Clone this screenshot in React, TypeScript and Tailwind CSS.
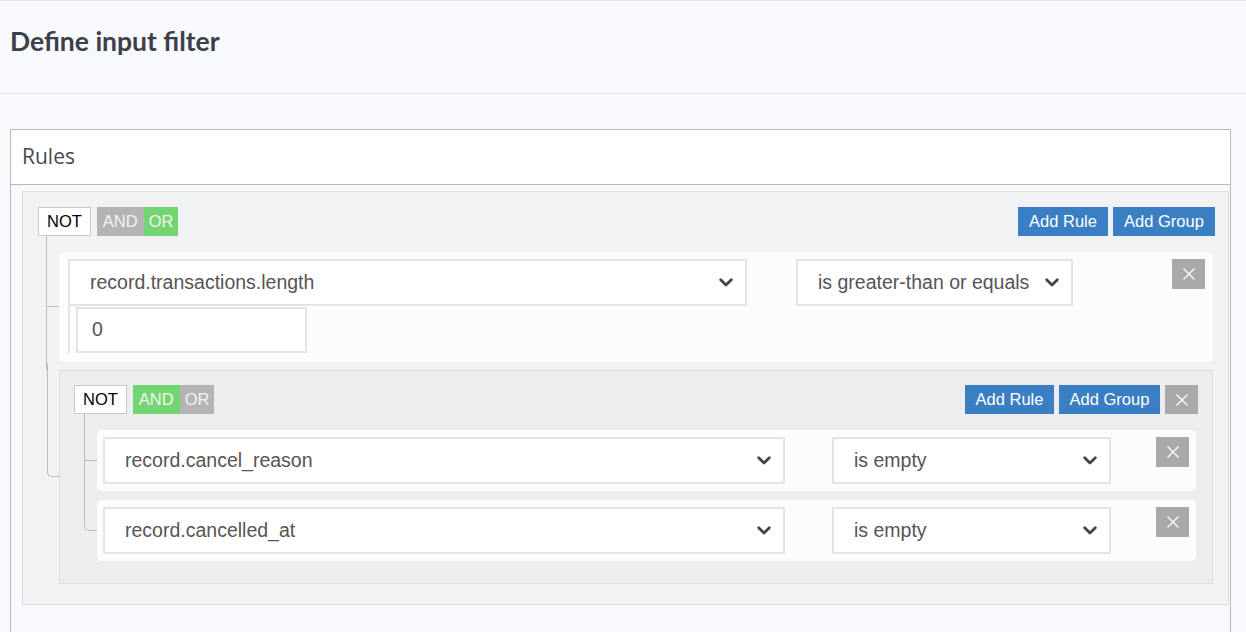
import React from "react";

const sans = { fontFamily: '"Liberation Sans", Arial, sans-serif' };

function Chevron() {
  return (
    <svg width="14" height="9" viewBox="0 0 14 9" className="shrink-0">
      <polyline points="1.7,1.7 7,7 12.3,1.7" fill="none" stroke="#444" strokeWidth="2.8" strokeLinecap="round" strokeLinejoin="round" />
    </svg>
  );
}

function XIcon() {
  return (
    <svg width="14" height="14" viewBox="0 0 14 14">
      <line x1="1.5" y1="1.5" x2="12.5" y2="12.5" stroke="#fff" strokeWidth="1.3" />
      <line x1="12.5" y1="1.5" x2="1.5" y2="12.5" stroke="#fff" strokeWidth="1.3" />
    </svg>
  );
}

function Select({ text, w }: { text: string; w: string }) {
  return (
    <div className={`${w} h-[47px] shrink-0 bg-white border-2 border-[#e4e4e4] flex items-center justify-between pl-[20px] pr-[12px] text-[19.5px] text-[#555]`}>
      <span>{text}</span>
      <Chevron />
    </div>
  );
}

function XButton({ h }: { h: string }) {
  return (
    <div className={`w-[33px] ${h} bg-[#a9a9a9] flex items-center justify-center shrink-0`}>
      <XIcon />
    </div>
  );
}

function Conditions({ and }: { and: boolean }) {
  return (
    <div className="flex items-center gap-[6px]">
      <div className="h-[29px] px-[8px] bg-white border border-[#c9c9c9] flex items-center text-[16.5px] text-black">NOT</div>
      <div className="flex h-[29px] text-[16.5px] text-[#f2f2f2]">
        <div className={`${and ? "bg-[#72d572]" : "bg-[#b4b4b4]"} px-[6px] flex items-center`}>AND</div>
        <div className={`${and ? "bg-[#b4b4b4]" : "bg-[#72d572]"} px-[5px] flex items-center`}>OR</div>
      </div>
    </div>
  );
}

function Connector({ gap, last, gapBelow }: { gap: number; last: boolean; gapBelow: number }) {
  return (
    <>
      <div
        className={`absolute left-[-13px] w-[13px] border-l border-b border-[#bdbdbd] ${last ? "rounded-bl-[5px]" : ""}`}
        style={{ top: -gap, height: `calc(50% + ${gap}px)` }}
      />
      {!last && (
        <div className="absolute left-[-13px] top-1/2 border-l border-[#bdbdbd]" style={{ bottom: -gapBelow }} />
      )}
    </>
  );
}

export default function App() {
  return (
    <div className="w-[1246px] h-[632px] overflow-hidden bg-[#f8f9fc] border-t border-[#e1e6ec]" style={sans}>
      <div className="h-[93px] border-b border-[#dde2e8] flex items-center px-[10px] pb-[10px]">
        <h1 className="text-[26.5px] font-bold text-[#3b4048]" style={{ fontFamily: 'Lato, "Open Sans", sans-serif' }}>
          Define input filter
        </h1>
      </div>

      <div className="ml-[10px] mr-[15px] mt-[35px] border border-[#b9b9b9] h-[600px]">
        <div className="h-[55px] bg-white border-b border-[#b9b9b9] flex items-center px-[11px]">
          <span className="text-[21px] text-[#454a52]" style={{ fontFamily: '"Open Sans", "Noto Sans", sans-serif' }}>Rules</span>
        </div>
        <div className="pl-[11px] pr-[1px] pt-[6px]">
          {/* root group */}
          <div className="border border-[#dedede] bg-[#f1f2f4] pt-[15px] pl-[15px] pr-[13px] pb-[20px]">
            <div className="flex items-center justify-between">
              <Conditions and={false} />
              <div className="flex gap-[5px] text-[16.5px] text-white">
                <div className="h-[29px] w-[90px] bg-[#3a7fc4] flex items-center justify-center">Add Rule</div>
                <div className="h-[29px] w-[102px] bg-[#3a7fc4] flex items-center justify-center">Add Group</div>
              </div>
            </div>
            <div className="ml-[21px] mr-[2px] mt-[16px] flex flex-col gap-[8px]">
              {/* rule 1 */}
              <div className="relative rounded-[5px] bg-[#fcfcfc] pl-[9px] pr-[8px] pt-[7px] pb-[9px]">
                <Connector gap={16} last={false} gapBelow={8} />
                <div className="flex items-start">
                  <Select text="record.transactions.length" w="w-[679px]" />
                  <div className="ml-[49px]">
                    <Select text="is greater-than or equals" w="w-[277px]" />
                  </div>
                  <div className="ml-auto">
                    <XButton h="h-[30px]" />
                  </div>
                </div>
                <div className="border-l-2 border-[#e4e4e4] pl-[6px] pt-[1px] w-fit">
                  <div className="w-[231px] h-[46px] bg-white border-2 border-[#e4e4e4] flex items-center pl-[14px] text-[19.5px] text-[#555]">0</div>
                </div>
              </div>

              {/* nested group */}
              <div className="relative border border-[#dedede] bg-[#ededed] pt-[14px] pl-[14px] pr-[14px] pb-[22px]">
                <Connector gap={8} last={true} gapBelow={0} />
                <div className="flex items-center justify-between">
                  <Conditions and={true} />
                  <div className="flex gap-[5px] text-[16.5px] text-white">
                    <div className="h-[29px] w-[89px] bg-[#3a7fc4] flex items-center justify-center">Add Rule</div>
                    <div className="h-[29px] w-[101px] bg-[#3a7fc4] flex items-center justify-center">Add Group</div>
                    <XButton h="h-[29px]" />
                  </div>
                </div>
                <div className="ml-[23px] mr-[2px] mt-[16px] flex flex-col gap-[9px]">
                  {["record.cancel_reason", "record.cancelled_at"].map((f, i) => (
                    <div key={f} className="relative rounded-[5px] bg-[#fcfcfc] pl-[6px] pr-[7px] py-[7px] flex items-start">
                      <Connector gap={i === 0 ? 16 : 9} last={i === 1} gapBelow={9} />
                      <Select text={f} w="w-[682px]" />
                      <div className="ml-[47px]">
                        <Select text="is empty" w="w-[279px]" />
                      </div>
                      <div className="ml-auto">
                        <XButton h="h-[30px]" />
                      </div>
                    </div>
                  ))}
                </div>
              </div>
            </div>
          </div>
        </div>
      </div>
    </div>
  );
}
